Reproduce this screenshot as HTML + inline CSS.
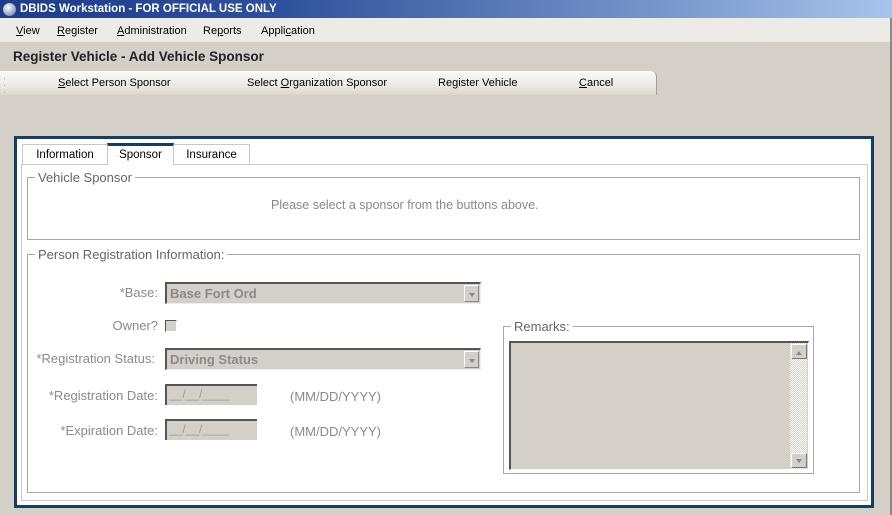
<!DOCTYPE html>
<html><head><style>
*{margin:0;padding:0;box-sizing:border-box}
body{width:892px;height:515px;background:#d4d0c8;font-family:"Liberation Sans",sans-serif;font-size:12px;position:relative;overflow:hidden}
.a{position:absolute}
.title{left:0;top:0;width:892px;height:18px;background:linear-gradient(90deg,#1d3c8c 0%,#2c4f9c 30%,#6f90c6 70%,#a6c4ec 100%);color:#fff;font-weight:bold;font-size:11.5px;line-height:18px;padding-left:20px}
.menu{left:0;top:18px;width:892px;height:24px;background:#ecebe6;font-size:11px;line-height:26px}
.menu span{position:absolute}
.ptitle{left:13px;top:49px;font-weight:bold;font-size:13.5px;color:#222}
.tb{left:0;top:71px;width:657px;height:24px;background:linear-gradient(#fbfbf9,#e8e6e0 70%,#d9d6ce);border-right:1px solid #a09e98;border-radius:0 6px 0 0;font-size:11px;line-height:24px}
.tb span{position:absolute}
.panel{left:14px;top:136px;width:860px;height:372px;border:3px solid #123f66;background:#fff}
.tab{top:144px;height:21px;border:1px solid #c8c8c8;border-bottom:none;background:#fff;font-size:11.5px;text-align:center;line-height:20px}
.gb{border:1px solid #a8a8a8}
.lg{background:#fff;color:#666;font-size:13px;padding:0 3px}
.lbl{color:#8a8a8a;font-size:13px;text-align:right;width:160px}
.sel{background:#d4d0c8;border-top:2px solid #555;border-left:2px solid #555;border-bottom:1px solid #eee;border-right:1px solid #eee;color:#8a8a8a;font-weight:bold;font-size:13px;padding-left:3px;line-height:19px}
.arr{position:absolute;right:1px;top:1px;width:15px;height:17px;border:1px solid #888;border-top-color:#fff;border-left-color:#fff;background:#d4d0c8}
.arr:after{content:"";position:absolute;left:4px;top:7px;border:3px solid transparent;border-top:4px solid #888}
.inp{background:#d4d0c8;border-top:2px solid #555;border-left:2px solid #555;color:#999;font-size:12px;padding-left:2px;line-height:17px}
.fmt{color:#8a8a8a;font-size:13px}
</style></head><body>
<div class="a title"><span class="a" style="left:3px;top:3px;width:13px;height:13px;border-radius:50%;background:radial-gradient(circle at 40% 35%,#fff,#9ab 60%,#567)"></span>DBIDS Workstation - FOR OFFICIAL USE ONLY</div>
<div class="a menu"><span style="left:16px"><u>V</u>iew</span><span style="left:57px"><u>R</u>egister</span><span style="left:117px"><u>A</u>dministration</span><span style="left:203px">Re<u>p</u>orts</span><span style="left:261px">Appli<u>c</u>ation</span></div>
<div class="a" style="left:890px;top:18px;width:2px;height:497px;background:#888"></div>
<div class="a ptitle">Register Vehicle - Add Vehicle Sponsor</div>
<div class="a tb"><span style="left:3px;top:0;color:#999;font-size:9px;line-height:7px;top:4px">·<br>·<br>·</span><span style="left:58px"><u>S</u>elect Person Sponsor</span><span style="left:247px">Select <u>O</u>rganization Sponsor</span><span style="left:438px">Re<u>g</u>ister Vehicle</span><span style="left:579px"><u>C</u>ancel</span></div>
<div class="a panel"></div>
<div class="a tab" style="left:22px;width:86px">Information</div>
<div class="a tab" style="left:107px;width:67px;top:143px;height:22px;border-top:3px solid #123f66;border-bottom:none;z-index:2;line-height:18px">Sponsor</div>
<div class="a tab" style="left:173px;width:77px">Insurance</div>
<div class="a" style="left:21px;top:164px;width:847px;height:337px;border:1px solid #c8c8c8"></div>
<div class="a gb" style="left:27px;top:177px;width:833px;height:63px"></div>
<span class="a lg" style="left:35px;top:170px">Vehicle Sponsor</span>
<div class="a" style="left:271px;top:198px;color:#888;font-size:12.5px">Please select a sponsor from the buttons above.</div>
<div class="a gb" style="left:27px;top:254px;width:833px;height:239px"></div>
<span class="a lg" style="left:35px;top:247px">Person Registration Information:</span>
<div class="a lbl" style="left:-2px;top:285px">*Base:</div>
<div class="a sel" style="left:165px;top:282px;width:316px;height:22px">Base Fort Ord<div class="arr"></div></div>
<div class="a lbl" style="left:-2px;top:318px">Owner?</div>
<div class="a" style="left:165px;top:320px;width:12px;height:12px;background:#d4d0c8;border-top:1px solid #555;border-left:1px solid #555;border-bottom:1px solid #fff;border-right:1px solid #fff"></div>
<div class="a lbl" style="left:-5px;top:351px">*Registration Status:</div>
<div class="a sel" style="left:165px;top:348px;width:316px;height:22px">Driving Status<div class="arr"></div></div>
<div class="a lbl" style="left:-2px;top:388px">*Registration Date:</div>
<div class="a inp" style="left:165px;top:384px;width:92px;height:21px">__/__/____</div>
<div class="a fmt" style="left:290px;top:389px">(MM/DD/YYYY)</div>
<div class="a lbl" style="left:-2px;top:423px">*Expiration Date:</div>
<div class="a inp" style="left:165px;top:419px;width:92px;height:21px">__/__/____</div>
<div class="a fmt" style="left:290px;top:424px">(MM/DD/YYYY)</div>
<div class="a gb" style="left:503px;top:326px;width:311px;height:148px"></div>
<span class="a lg" style="left:511px;top:319px">Remarks:</span>
<div class="a" style="left:509px;top:341px;width:300px;height:129px;background:#d4d0c8;border-top:2px solid #555;border-left:2px solid #555;border-bottom:1px solid #fff;border-right:1px solid #fff"></div>
<div class="a" style="left:790px;top:343px;width:17px;height:126px;background:repeating-conic-gradient(#fff 0 25%,#d4d0c8 0 50%) 0 0/2px 2px"></div>
<div class="a" style="left:791px;top:344px;width:16px;height:15px;background:#d4d0c8;border:1px solid #777;border-top-color:#fff;border-left-color:#fff"><div class="a" style="left:4px;top:3px;border:3px solid transparent;border-bottom:4px solid #888"></div></div>
<div class="a" style="left:791px;top:453px;width:16px;height:15px;background:#d4d0c8;border:1px solid #777;border-top-color:#fff;border-left-color:#fff"><div class="a" style="left:4px;top:5px;border:3px solid transparent;border-top:4px solid #888"></div></div>
</body></html>
